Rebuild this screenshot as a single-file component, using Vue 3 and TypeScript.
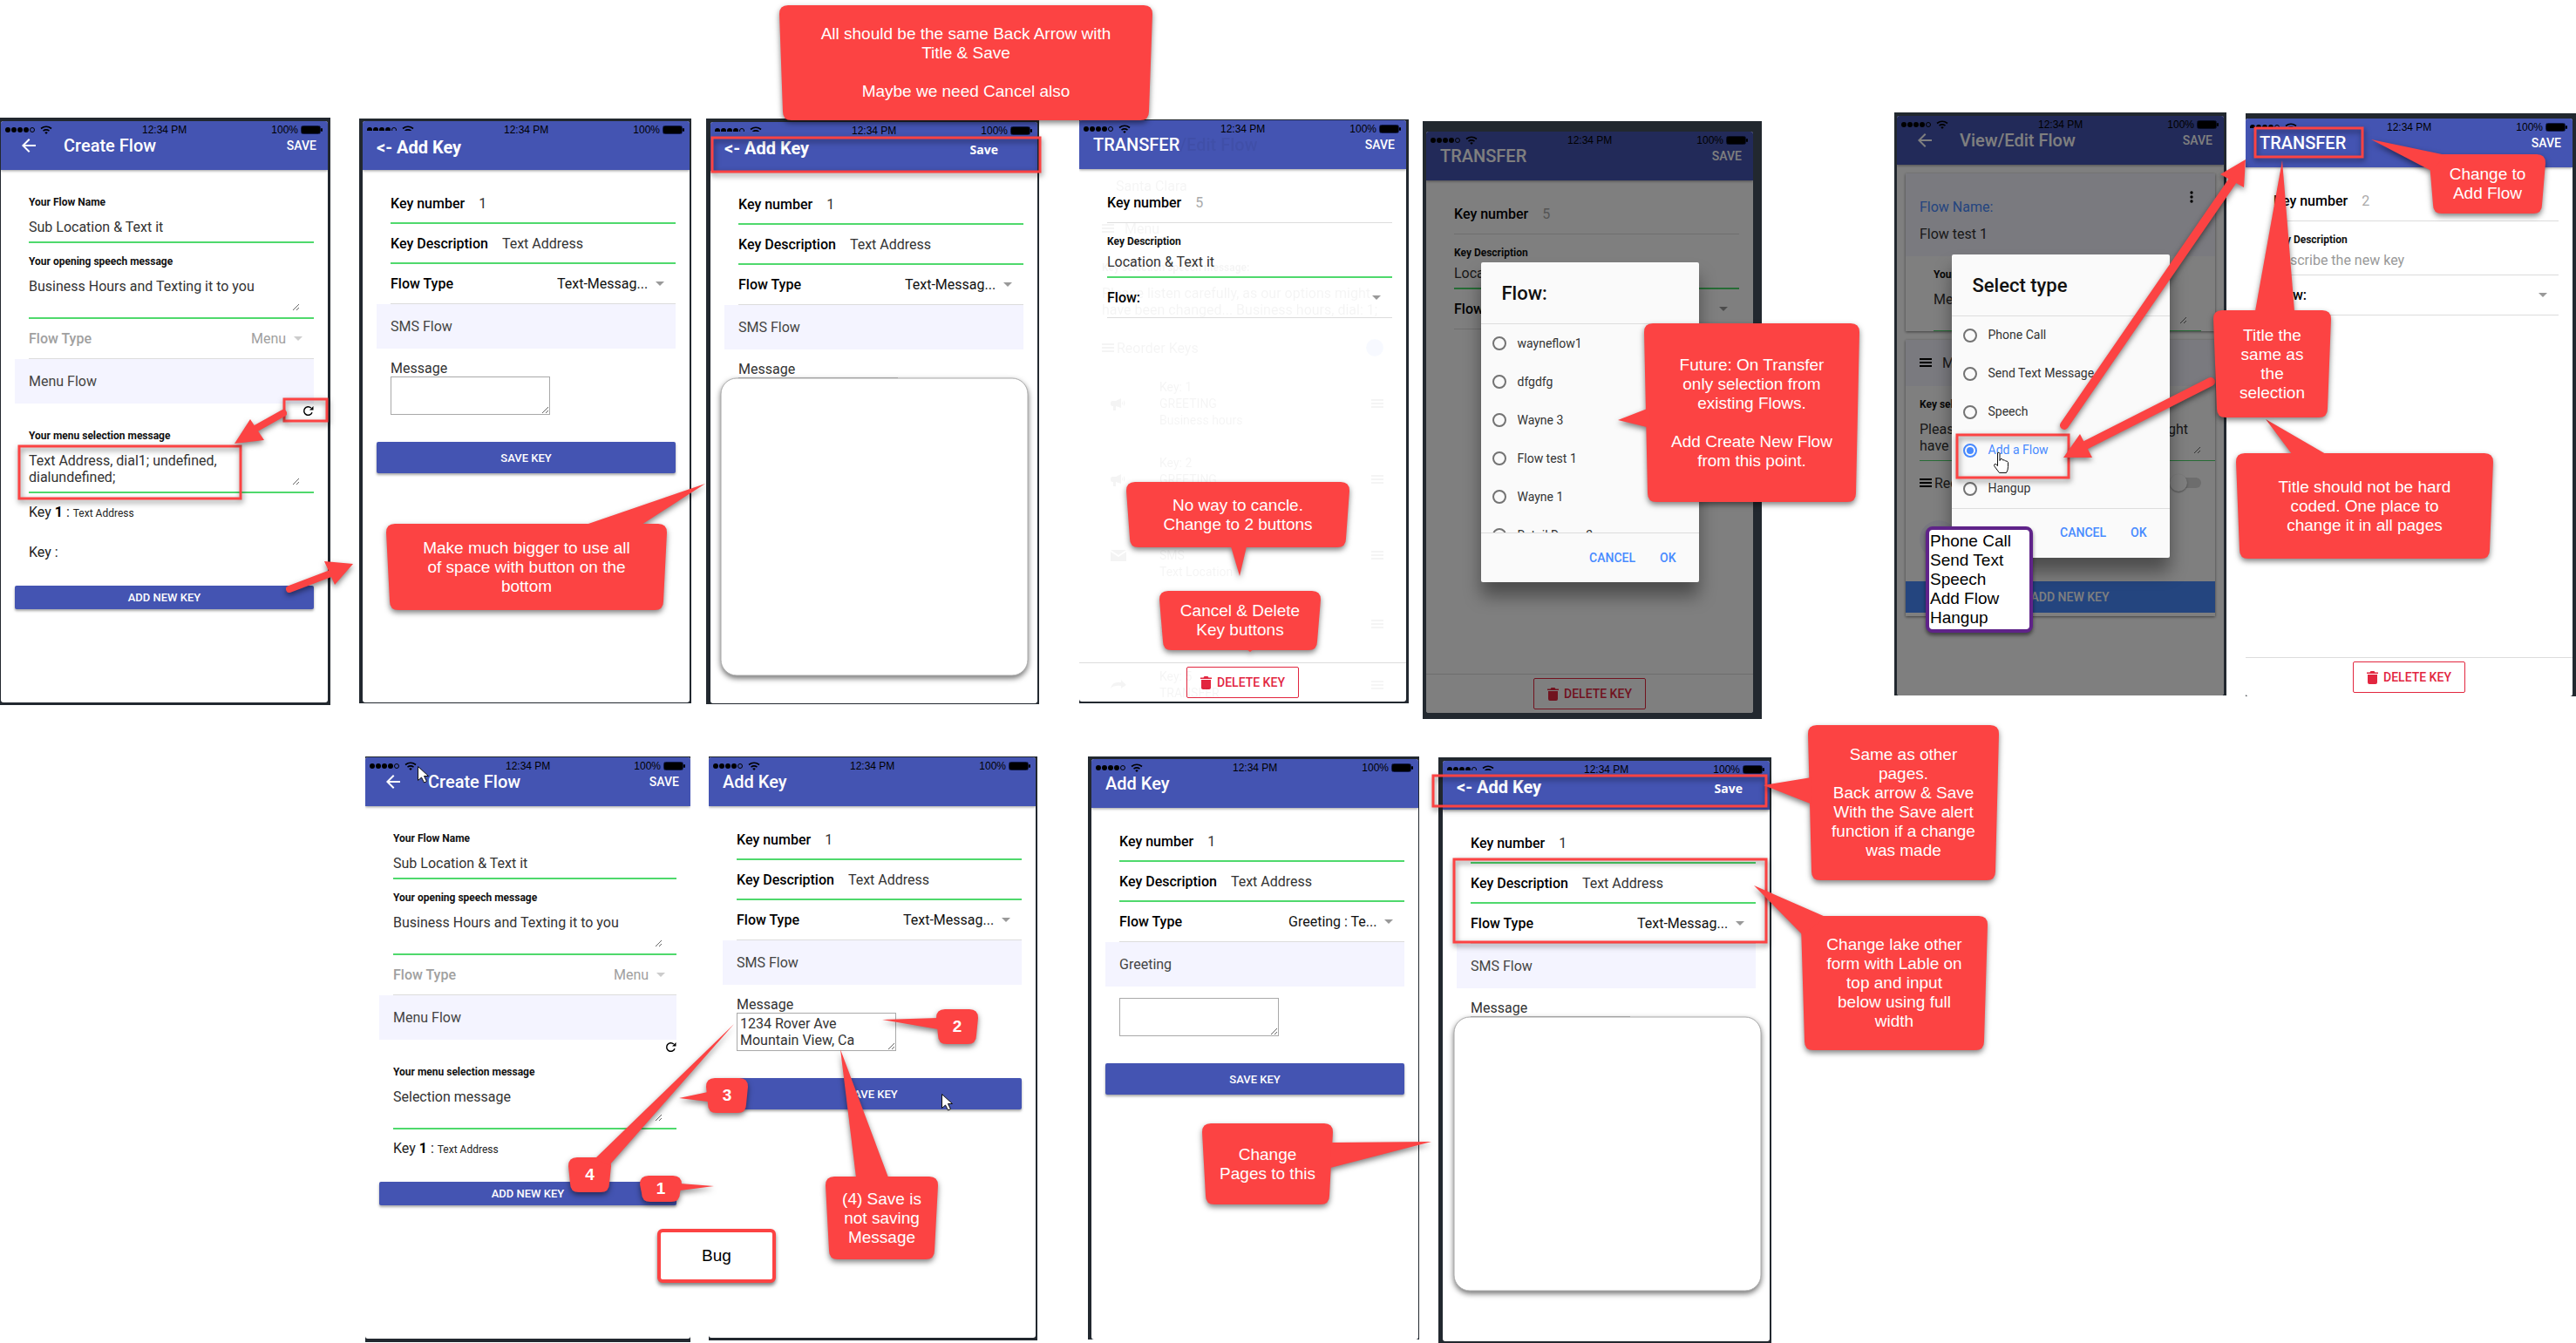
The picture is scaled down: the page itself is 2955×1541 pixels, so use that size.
<script setup lang="ts">
type Point = [number, number]

interface Field {
  kind: 'row' | 'stack' | 'area' | 'select' | 'band' | 'refresh' | 'key' | 'message' | 'button'
  label?: string
  value?: string
  placeholder?: string
  muted?: boolean
  plain?: boolean
  roomy?: boolean
  small?: boolean
}

interface Device {
  id: string
  x: number
  y: number
  w: number
  h: number
  bezel: string
  title: string
  back?: boolean
  bold?: boolean
  edge?: boolean
  action?: string
  patched?: boolean
  fields: Field[]
  remove?: boolean
  ghost?: boolean
  cards?: boolean
  dialog?: { title: string; options: string[]; chosen?: string }
}

interface Callout {
  x: number
  y: number
  w: number
  h: number
  text: string
  strong?: boolean
  tail: Point[]
}

const createFields = (message: string, keys: Field[]): Field[] => [
  { kind: 'stack', label: 'Your Flow Name', value: 'Sub Location & Text it', roomy: true },
  { kind: 'area', label: 'Your opening speech message', value: 'Business Hours and Texting it to you' },
  { kind: 'select', label: 'Flow Type', value: 'Menu', muted: true },
  { kind: 'band', label: 'Menu Flow' },
  { kind: 'refresh' },
  { kind: 'area', label: 'Your menu selection message', value: message },
  ...keys,
  { kind: 'button', label: 'ADD NEW KEY', small: true },
]

const addKeyFields = (flowType: string, band: string, message: Field): Field[] => [
  { kind: 'row', label: 'Key number', value: '1' },
  { kind: 'row', label: 'Key Description', value: 'Text Address' },
  { kind: 'select', label: 'Flow Type', value: flowType },
  { kind: 'band', label: band },
  message,
  { kind: 'button', label: 'SAVE KEY' },
]

const transferFields = (key: string, description: string): Field[] => [
  { kind: 'row', label: 'Key number', value: key, muted: true, plain: true },
  {
    kind: 'stack',
    label: 'Key Description',
    value: description,
    placeholder: 'Describe the new key',
    plain: !description,
  },
  { kind: 'select', label: 'Flow:', value: '' },
]

const firstKey: Field = { kind: 'key', label: '1', value: 'Text Address' }
const sms = (value = ''): Field => ({ kind: 'message', label: 'Message', value })

const devices: Device[] = [
  {
    id: 'create-a', x: 0, y: 135, w: 379, h: 674, bezel: '4px 3px 3px 1px',
    title: 'Create Flow', back: true, action: 'SAVE',
    fields: createFields('Text Address, dial1; undefined,\ndialundefined;', [firstKey, { kind: 'key', label: '' }]),
  },
  {
    id: 'add-a', x: 412, y: 136, w: 381, h: 671, bezel: '3px 2px 1px 4px',
    title: '<- Add Key', bold: true, patched: true,
    fields: addKeyFields('Text-Messag...', 'SMS Flow', sms()),
  },
  {
    id: 'add-b', x: 810, y: 136, w: 382, h: 672, bezel: '4px 2px 1px 5px',
    title: '<- Add Key', bold: true, patched: true, action: 'Save',
    fields: addKeyFields('Text-Messag...', 'SMS Flow', sms()),
  },
  {
    id: 'transfer-a', x: 1238, y: 137, w: 378, h: 670, bezel: '1px 3px 2px 0',
    title: 'TRANSFER', action: 'SAVE', remove: true, ghost: true,
    fields: transferFields('5', 'Location & Text it'),
  },
  {
    id: 'transfer-b', x: 1632, y: 139, w: 389, h: 686, bezel: '12px 10px 7px 4px',
    title: 'TRANSFER', action: 'SAVE', remove: true,
    fields: transferFields('5', 'Location & Text it'),
    dialog: { title: 'Flow:', options: ['wayneflow1', 'dfgdfg', 'Wayne 3', 'Flow test 1', 'Wayne 1', 'Retail Demo 2'] },
  },
  {
    id: 'view', x: 2173, y: 129, w: 381, h: 669, bezel: '4px 3px 0 3px',
    title: 'View/Edit Flow', back: true, action: 'SAVE', cards: true,
    fields: [],
    dialog: {
      title: 'Select type',
      options: ['Phone Call', 'Send Text Message', 'Speech', 'Add a Flow', 'Hangup'],
      chosen: 'Add a Flow',
    },
  },
  {
    id: 'transfer-c', x: 2576, y: 130, w: 379, h: 669, bezel: '6px 4px 0 0',
    title: 'TRANSFER', action: 'SAVE', remove: true, patched: true,
    fields: transferFields('2', ''),
  },
  {
    id: 'create-b', x: 419, y: 868, w: 373, h: 672, bezel: '1px 0 4px 0',
    title: 'Create Flow', back: true, action: 'SAVE',
    fields: createFields('Selection message', [firstKey]),
  },
  {
    id: 'add-c', x: 813, y: 868, w: 377, h: 670, bezel: '1px 2px 3px 0',
    title: 'Add Key',
    fields: addKeyFields('Text-Messag...', 'SMS Flow', sms('1234 Rover Ave\nMountain View, Ca')),
  },
  {
    id: 'add-d', x: 1248, y: 868, w: 380, h: 669, bezel: '3px 1px 0 4px',
    title: 'Add Key',
    fields: addKeyFields('Greeting : Te...', 'Greeting', { kind: 'message', value: '' }),
  },
  {
    id: 'add-e', x: 1650, y: 869, w: 382, h: 672, bezel: '4px 2px 2px 5px',
    title: '<- Add Key', bold: true, edge: true, patched: true, action: 'Save',
    fields: addKeyFields('Text-Messag...', 'SMS Flow', sms()),
  },
]

const callouts: Callout[] = [
  { x: 894, y: 6, w: 428, h: 132, text: 'All should be the same Back Arrow with\nTitle & Save\n\nMaybe we need Cancel also', tail: [] },
  { x: 443, y: 601, w: 322, h: 99, text: 'Make much bigger to use all\nof space with button on the\nbottom', tail: [[672, 602], [809, 555], [736, 602]] },
  { x: 1292, y: 553, w: 256, h: 75, text: 'No way to cancle.\nChange to 2 buttons', tail: [[1412, 627], [1422, 661], [1430, 627]] },
  { x: 1330, y: 678, w: 185, h: 68, text: 'Cancel & Delete\nKey buttons', tail: [[1430, 745], [1434, 748], [1438, 745]] },
  { x: 1886, y: 371, w: 247, h: 205, text: 'Future: On Transfer\nonly selection from\nexisting Flows.\n\nAdd Create New Flow\nfrom this point.', tail: [[1892, 468], [1856, 482], [1893, 491]] },
  { x: 2787, y: 177, w: 133, h: 68, text: 'Change to\nAdd Flow', tail: [[2789, 196], [2720, 160], [2806, 178]] },
  { x: 2565, y: 520, w: 295, h: 121, text: 'Title should not be hard\ncoded. One place to\nchange it in all pages', tail: [[2629, 521], [2599, 481], [2668, 521]] },
  { x: 2539, y: 356, w: 135, h: 123, text: 'Title the\nsame as\nthe\nselection', tail: [[2587, 357], [2618, 184], [2632, 357]] },
  { x: 810, y: 1237, w: 48, h: 40, text: '3', strong: true, tail: [[812, 1253], [779, 1260], [812, 1264]] },
  { x: 1074, y: 1158, w: 48, h: 40, text: '2', strong: true, tail: [[1076, 1168], [1012, 1170], [1076, 1181]] },
  { x: 652, y: 1328, w: 49, h: 40, text: '4', strong: true, tail: [[682, 1330], [842, 1175], [699, 1337]] },
  { x: 734, y: 1349, w: 48, h: 30, text: '1', strong: true, tail: [[780, 1358], [819, 1361], [780, 1366]] },
  { x: 947, y: 1350, w: 129, h: 95, text: '(4) Save is\nnot saving\nMessage', tail: [[982, 1351], [964, 1204], [1019, 1351]] },
  { x: 1379, y: 1289, w: 150, h: 93, text: 'Change\nPages to this', tail: [[1527, 1311], [1642, 1310], [1526, 1340]] },
  { x: 2074, y: 832, w: 219, h: 178, text: 'Same as other\npages.\nBack arrow & Save\nWith the Save alert\nfunction if a change\nwas made', tail: [[2078, 892], [2023, 901], [2079, 923]] },
  { x: 2066, y: 1051, w: 214, h: 154, text: 'Change lake other\nform with Lable on\ntop and input\nbelow using full\nwidth', tail: [[2068, 1073], [2012, 1016], [2094, 1052]] },
]

// Speech bubbles narrow slightly toward their lower edge.
const bubblePath = (c: Callout): string => {
  const r = 10
  const d = c.w > 60 ? 4 : 2
  const [l, t, rt, b] = [c.x, c.y, c.x + c.w, c.y + c.h]
  return [
    `M${l + r} ${t}H${rt - r}Q${rt} ${t} ${rt} ${t + r}`,
    `L${rt - d} ${b - r}Q${rt - d} ${b} ${rt - d - r} ${b}`,
    `H${l + d + r}Q${l + d} ${b} ${l + d} ${b - r}`,
    `L${l} ${t + r}Q${l} ${t} ${l + r} ${t}Z`,
  ].join('')
}

const highlights = [
  { x: 326, y: 458, w: 49, h: 25 },
  { x: 22, y: 512, w: 254, h: 60 },
  { x: 817, y: 158, w: 376, h: 39 },
  { x: 2245, y: 499, w: 128, h: 49 },
  { x: 2587, y: 147, w: 123, h: 33 },
  { x: 1644, y: 890, w: 382, h: 35 },
  { x: 1668, y: 986, w: 358, h: 95 },
]

const arrows = [
  { from: [325, 474], to: [291, 493], head: '269,509 287,481 303,505', weight: 8 },
  { from: [332, 676], to: [382, 657], head: '405,647 372,644 384,671', weight: 8 },
  { from: [2368, 488], to: [2562, 206], head: '2576,183 2547,200 2574,215', weight: 10 },
  { from: [2536, 438], to: [2390, 512], head: '2367,525 2386,498 2400,525', weight: 10 },
]

const panels = [
  { x: 827, y: 434, w: 352, h: 341 },
  { x: 1668, y: 1167, w: 352, h: 314 },
]

const box = (b: { x: number; y: number; w: number; h: number }) => ({
  left: `${b.x}px`,
  top: `${b.y}px`,
  width: `${b.w}px`,
  height: `${b.h}px`,
})

const ghostKeys = [
  { icon: 'horn', lines: ['Key: 1', 'GREETING', 'Business hours'] },
  { icon: 'horn', lines: ['Key: 2', 'GREETING', ''] },
  { icon: 'mail', lines: ['', 'SMS', 'Text Location'] },
  { icon: '', lines: ['Key: 4', 'HANGUP'] },
  { icon: 'turn', lines: ['Key: 5', 'TRANSFER'] },
]
</script>

<template>
  <main class="board">
    <section v-for="d in devices" :key="d.id" class="device" :style="{ ...box(d), padding: d.bezel }">
      <div class="screen">
        <header class="bar">
          <div class="status">
            <svg class="signal" :class="{ patched: d.patched }" width="54" height="12" viewBox="0 0 54 12">
              <circle v-for="n in 4" :key="n" :cx="n * 7 - 4" cy="6" r="3" />
              <circle cx="31" cy="6" r="2.5" fill="none" stroke="#000" />
              <g fill="none" stroke="#000" stroke-width="1.6">
                <path d="M41 4.5q6-4.5 12 0M43.5 7.2q3.500-2.600 7 0" />
              </g>
              <path d="M45.200 9q1.800-1.400 3.600 0L47 11z" />
            </svg>
            <span class="clock">12:34 PM</span>
            <span class="power">100%
              <svg width="25" height="10" viewBox="0 0 25 10">
                <rect x=".5" y=".5" width="22" height="9" rx="2" fill="none" stroke="#111a4a" />
                <rect x="1" y="1" width="21" height="8" rx="1" />
                <rect x="23" y="3" width="2" height="4" rx="1" />
              </svg>
            </span>
          </div>
          <button v-if="d.back" class="back" aria-label="Back">
            <svg width="24" height="24" viewBox="0 0 24 24"><path fill="currentColor" d="M20 11H7.830l5.590-5.590L12 4l-8 8 8 8 1.410-1.410L7.830 13H20z" /></svg>
          </button>
          <h2 class="title" :class="{ bold: d.bold }">{{ d.title }}</h2>
          <span v-if="d.ghost" class="ghost-title" aria-hidden="true">/Edit Flow</span>
          <button v-if="d.action" class="action" :class="{ inset: d.bold, edge: d.edge }">{{ d.action }}</button>
        </header>

        <div v-if="d.ghost" class="ghost" aria-hidden="true">
          <p class="g-top">Santa Clara</p>
          <p class="g-menu"><i class="lines"></i>Menu</p>
          <p class="g-label">Key selection speech message:</p>
          <p class="g-text">Please listen carefully, as our options might<br />have been changed... Business hours, dial: 1;</p>
          <p class="g-order"><i class="lines"></i>Reorder Keys<i class="knob"></i></p>
          <div v-for="(k, i) in ghostKeys" :key="i" class="g-key" :class="{ short: k.lines.length < 3 }">
            <svg width="18" height="16" viewBox="0 0 18 16">
              <path v-if="k.icon === 'horn'" d="M0 6q0-2 2-2h4l6-3v11l-6-2v5H3V10H2q-2 0-2-2zM13 4q2 3 0 5M15 3q3 4 0 7" />
              <path v-else-if="k.icon === 'mail'" d="M0 3l9 6 9-6v11H0zM0 1h18l-9 6z" />
              <path v-else-if="k.icon === 'turn'" d="M0 12Q2 3 12 5V2l6 6-6 4V9Q4 8 0 12z" />
            </svg>
            <div><span v-for="(l, j) in k.lines" :key="j">{{ l }}</span></div>
            <i class="lines"></i>
          </div>
        </div>

        <form v-if="!d.cards" class="form" @submit.prevent>
          <template v-for="(f, i) in d.fields" :key="i">
            <label v-if="f.kind === 'row'" class="field row" :class="{ plain: f.plain, muted: f.muted }">
              <span class="name">{{ f.label }}</span>
              <input type="text" :value="f.value" :disabled="f.muted" />
            </label>
            <label v-else-if="f.kind === 'stack'" class="field stack" :class="{ plain: f.plain, roomy: f.roomy }">
              <span class="caption">{{ f.label }}</span>
              <input type="text" :value="f.value" :placeholder="f.placeholder" />
            </label>
            <label v-else-if="f.kind === 'area'" class="field stack roomy">
              <span class="caption">{{ f.label }}</span>
              <textarea class="free" rows="2" :value="f.value"></textarea>
            </label>
            <label v-else-if="f.kind === 'select'" class="field row choice plain" :class="{ faded: f.muted }">
              <span class="name">{{ f.label }}</span>
              <select :disabled="f.muted"><option>{{ f.value }}</option></select>
              <i class="caret"></i>
            </label>
            <p v-else-if="f.kind === 'band'" class="band">{{ f.label }}</p>
            <div v-else-if="f.kind === 'refresh'" class="refresh">
              <button aria-label="Refresh">
                <svg width="13" height="13" viewBox="0 0 13 13">
                  <path fill="none" stroke="#000" stroke-width="1.500" d="M11 8.200A4.800 4.800 0 1 1 9.800 3" />
                  <path d="M12.500 1v4.500H8z" />
                </svg>
              </button>
            </div>
            <p v-else-if="f.kind === 'key'" class="key">
              Key <template v-if="f.label"><b>{{ f.label }}</b>&nbsp;</template>: <small>{{ f.value }}</small>
            </p>
            <label v-else-if="f.kind === 'message'" class="message">
              <span v-if="f.label">{{ f.label }}</span>
              <textarea rows="2" :value="f.value" :aria-label="f.label || 'Greeting'"></textarea>
            </label>
            <button v-else class="wide" :class="{ small: f.small }">{{ f.label }}</button>
          </template>
        </form>

        <div v-else class="cards">
          <article class="card">
            <div class="card-head tall">
              <div><p class="blue">Flow Name:</p><p>Flow test 1</p></div>
              <svg width="4" height="14" viewBox="0 0 4 14"><circle cx="2" cy="2" r="1.700" /><circle cx="2" cy="7" r="1.700" /><circle cx="2" cy="12" r="1.700" /></svg>
            </div>
            <label class="field stack roomy inset">
              <span class="caption">Your opening speech message</span>
              <textarea class="free" rows="2">Message</textarea>
            </label>
          </article>
          <article class="card">
            <div class="card-head"><i class="lines"></i><span>Menu</span></div>
            <label class="field stack roomy side">
              <span class="caption">Key selection speech message:</span>
              <textarea class="free" rows="2">Please listen carefully, as our options might
have been changed</textarea>
            </label>
            <label class="order"><i class="lines"></i><span>Reorder Keys</span><input type="checkbox" class="switch" /></label>
            <div class="avatar"></div>
            <button class="new-key">ADD NEW KEY</button>
          </article>
        </div>

        <footer v-if="d.remove" class="footer">
          <button class="delete">
            <svg width="13" height="15" viewBox="0 0 13 15"><path fill="currentColor" d="M0 1.500h3.500L4.500 0h4l1 1.500H13V3H0zM1 4h11v9q0 2-2 2H3q-2 0-2-2z" /></svg>
            DELETE KEY
          </button>
        </footer>

        <div v-if="d.dialog" class="scrim">
          <div class="dialog" role="dialog" :aria-label="d.dialog.title">
            <h3>{{ d.dialog.title }}</h3>
            <div class="options">
              <label v-for="o in d.dialog.options" :key="o" :class="{ chosen: o === d.dialog.chosen }">
                <input type="radio" :name="d.id" :checked="o === d.dialog.chosen" />{{ o }}
              </label>
            </div>
            <div class="dialog-foot"><button>CANCEL</button><button>OK</button></div>
          </div>
        </div>
      </div>
    </section>

    <svg class="marks" aria-hidden="true">
      <rect v-for="p in panels" :key="p.y" class="panel" :x="p.x" :y="p.y" :width="p.w" :height="p.h" rx="18" />
      <rect v-for="(h, i) in highlights" :key="'h' + i" class="outline" :x="h.x" :y="h.y" :width="h.w" :height="h.h" />
      <g v-for="(a, i) in arrows" :key="'a' + i" class="red">
        <line :x1="a.from[0]" :y1="a.from[1]" :x2="a.to[0]" :y2="a.to[1]" :stroke-width="a.weight" stroke="#fc4343" stroke-linecap="round" />
        <polygon :points="a.head" />
      </g>
      <g v-for="c in callouts" :key="c.text" class="red">
        <path :d="bubblePath(c)" />
        <polygon v-if="c.tail.length" :points="c.tail.join(' ')" />
      </g>
      <g fill="#fff" stroke="#111" stroke-width="1">
        <path d="M479.500 879.500v16l4-3.500 3 6 3-1.500-3-6h5z" />
        <path d="M1080.500 1255.500v16l4-3.500 3 6 3-1.500-3-6h5z" />
        <path d="M2291.500 519.500q2-1 2.500 1v8l1-2q2-.5 2.500 1.500 2-1 3 1 2-.5 3 1.500v5q0 4-2 7h-8l-6-8q0-2.500 2-2l2 2v-12.500z" />
      </g>
    </svg>

    <p v-for="c in callouts" :key="c.text" class="note" :class="{ strong: c.strong }" :style="box(c)">{{ c.text }}</p>

    <p class="bug">Bug</p>
    <ul class="types">
      <li>Phone Call</li>
      <li>Send Text</li>
      <li>Speech</li>
      <li>Add Flow</li>
      <li>Hangup</li>
    </ul>
  </main>
</template>

<style>
body {
  margin: 0;
  background: #fff;
}
</style>

<style scoped>
* {
  box-sizing: border-box;
}

p,
h2,
h3,
ul {
  margin: 0;
  padding: 0;
}

button,
input,
select,
textarea {
  margin: 0;
  padding: 0;
  border: 0;
  outline: 0;
  background: none;
  color: inherit;
  font: inherit;
}

.board {
  position: relative;
  min-height: 100vh;
  overflow: hidden;
  font: 16px/19px Roboto, "Liberation Sans", sans-serif;
  color: #333;
}

.device {
  position: absolute;
  isolation: isolate;
  background: #22282f;
}

.screen {
  position: relative;
  display: flex;
  flex-direction: column;
  height: 100%;
  overflow: hidden;
  border-radius: 3px;
  background: #fff;
}

.bar {
  position: relative;
  z-index: 1;
  display: flex;
  align-items: center;
  flex: none;
  height: 56px;
  padding: 0 13px 0 16px;
  background: #4454b2;
  color: #fff;
  box-shadow: 0 1px 3px rgba(0, 0, 0, 0.4);
}

.status {
  position: absolute;
  top: 4px;
  left: 5px;
  right: 6px;
  display: flex;
  justify-content: space-between;
  font: 12px/12px "Liberation Sans", Arial, sans-serif;
  color: #000;
}

.signal {
  flex: none;
}

.signal.patched {
  clip-path: inset(0 0 5px 0);
}

.clock {
  padding-left: 6px;
}

.power {
  display: flex;
  align-items: center;
  gap: 3px;
}

.back {
  display: flex;
  width: 56px;
  padding-left: 4px;
}

.title {
  font-size: 20px;
  line-height: 24px;
  font-weight: 500;
}

.title.bold {
  padding-top: 4px;
  font-weight: 700;
}

.action {
  margin-left: auto;
  font-size: 14px;
  line-height: 20px;
  font-weight: 500;
}

.action.inset {
  padding: 8px 32px 0 0;
  font-family: "Open Sans", sans-serif;
  font-weight: 700;
}

.action.edge {
  padding-right: 18px;
}

.ghost-title {
  font-size: 20px;
  font-weight: 500;
  opacity: 0.05;
  color: #000;
}

.form {
  display: flex;
  flex-direction: column;
  flex: 1;
  padding: 16px 16px 0;
}

.field {
  margin-left: 16px;
  border-bottom: 2px solid #4fd96c;
}

.field.plain {
  border-bottom: 1px solid #dcdcdc;
}

.field input {
  min-width: 0;
  width: 100%;
  height: 19px;
}

.row {
  display: flex;
  align-items: center;
  gap: 16px;
  height: 46px;
}

.name {
  flex: none;
  font-weight: 500;
  color: #000;
}

.muted input {
  color: #aaa;
}

.choice {
  gap: 8px;
  padding-right: 13px;
}

.choice select {
  margin-left: auto;
  appearance: none;
  color: #111;
  opacity: 1;
}

.choice.faded .name,
.choice.faded select {
  color: #a0a0a0;
}

.caret {
  border: 5px solid transparent;
  border-top-color: #999;
  border-bottom: 0;
}

.faded .caret {
  border-top-color: #ccc;
}

.stack {
  display: flex;
  flex-direction: column;
  gap: 6px;
  padding: 14px 0 7px;
}

.stack.roomy {
  gap: 11px;
}

.caption {
  font-size: 12px;
  line-height: 15px;
  font-weight: 700;
  color: #111;
}

.stack input::placeholder {
  color: #999;
  opacity: 1;
}

.free {
  margin-right: 16px;
  height: 38px;
  overflow: hidden;
}

.band {
  padding: 16px;
  background: #f4f4ff;
  line-height: 19px;
  color: #444;
}

.refresh {
  display: flex;
  justify-content: flex-end;
  height: 16px;
}

.refresh button {
  display: flex;
  align-items: center;
}

.key {
  padding: 12px 16px 13px;
  color: #222;
}

.key b {
  color: #000;
}

.key small {
  font-size: 12px;
}

.message {
  display: flex;
  flex-direction: column;
  align-items: flex-start;
  padding: 13px 16px 31px;
}

.message textarea {
  width: 183px;
  height: 44px;
  padding: 2px 3px;
  overflow: hidden;
  border: 1px solid #a9a9a9;
}

.wide {
  height: 36px;
  border-radius: 2px;
  background: #4454b2;
  box-shadow: 0 2px 3px rgba(0, 0, 0, 0.35);
  font-size: 13px;
  font-weight: 500;
  color: #fff;
}

.wide.small {
  height: 27px;
  margin-top: 14px;
}

.footer {
  display: flex;
  justify-content: center;
  align-items: center;
  height: 45px;
  border-top: 1px solid #ddd;
}

.delete {
  display: flex;
  justify-content: center;
  align-items: center;
  gap: 6px;
  width: 129px;
  height: 36px;
  border: 1px solid #e2263f;
  border-radius: 2px;
  font-size: 14px;
  font-weight: 500;
  color: #e2263f;
}

.lines {
  flex: none;
  width: 14px;
  height: 11px;
  background: repeating-linear-gradient(#000 0 2px, transparent 2px 4px);
}

.ghost {
  position: absolute;
  inset: 56px 0 0;
  padding: 8px 26px 0;
  overflow: hidden;
  color: #000;
  opacity: 0.04;
}

.ghost p {
  display: flex;
  align-items: center;
}

.ghost .g-top {
  height: 22px;
  padding-left: 16px;
}

.ghost .g-menu {
  height: 76px;
  gap: 12px;
}

.ghost .g-label {
  height: 14px;
  font-size: 12px;
  font-weight: 700;
}

.ghost .g-text {
  height: 64px;
}

.ghost .g-order {
  height: 42px;
  gap: 3px;
}

.knob {
  width: 20px;
  height: 20px;
  margin-left: auto;
  border-radius: 50%;
  background: #488aff;
}

.g-key {
  display: flex;
  align-items: center;
  gap: 38px;
  height: 87px;
  padding: 0 0 0 10px;
  font-size: 14px;
}

.g-key.short {
  height: 70px;
}

.g-key div {
  display: flex;
  flex-direction: column;
}

.g-key span {
  height: 19px;
}

.g-key .lines {
  margin-left: auto;
}

.cards {
  display: flex;
  flex-direction: column;
  gap: 10px;
  padding: 10px;
}

.card {
  box-shadow: 0 1px 3px rgba(0, 0, 0, 0.5);
}

.card-head {
  display: flex;
  align-items: center;
  gap: 12px;
  height: 53px;
  padding: 0 16px;
  background: #f4f4ff;
}

.card-head.tall {
  align-items: flex-start;
  justify-content: space-between;
  height: 95px;
  padding: 20px 25px 0 16px;
}

.tall p {
  padding: 9px 0 3px;
}

.tall .blue {
  color: #488aff;
}

.card .field {
  border-bottom-width: 1px;
}

.card .inset {
  margin: 0 16px 0 32px;
}

.order {
  display: flex;
  align-items: center;
  gap: 3px;
  height: 50px;
  padding: 0 16px;
}

.switch {
  appearance: none;
  position: relative;
  width: 34px;
  height: 12px;
  margin-left: auto;
  border-radius: 6px;
  background: #dadada;
}

.switch::before {
  content: "";
  position: absolute;
  top: -4px;
  left: -2px;
  width: 20px;
  height: 20px;
  border-radius: 50%;
  background: #fff;
  box-shadow: 0 1px 2px rgba(0, 0, 0, 0.4);
}

.avatar {
  width: 44px;
  height: 44px;
  margin: 18px 16px 26px;
  border-radius: 50%;
  background: #f0f0ff;
}

.new-key {
  width: 100%;
  height: 36px;
  margin-bottom: 4px;
  padding-left: 22px;
  background: #488aff;
  font-size: 14px;
  font-weight: 500;
  color: #fff;
}

.scrim {
  position: absolute;
  inset: 0;
  z-index: 2;
  display: flex;
  align-items: center;
  justify-content: center;
  background: rgba(0, 0, 0, 0.5);
}

.dialog {
  width: 250px;
  border-radius: 2px;
  background: #fafafa;
  box-shadow: 0 16px 20px rgba(0, 0, 0, 0.4);
}

.dialog h3 {
  padding: 23px 24px 21px;
  border-bottom: 1px solid #ddd;
  font-size: 22px;
  line-height: 26px;
  font-weight: 500;
  color: #111;
}

.options {
  max-height: 239px;
  overflow: hidden;
}

.options label {
  display: flex;
  align-items: center;
  gap: 13px;
  height: 44px;
  padding-left: 13px;
  font-size: 14px;
}

.options .chosen {
  color: #488aff;
}

.options input {
  appearance: none;
  width: 16px;
  height: 16px;
  border: 2px solid #737373;
  border-radius: 50%;
}

.options input:checked {
  border-color: #488aff;
  background: #488aff;
  background-clip: content-box;
  padding: 2px;
}

.dialog-foot {
  display: flex;
  justify-content: flex-end;
  gap: 28px;
  height: 57px;
  padding-right: 26px;
  border-top: 1px solid #ddd;
  font-size: 14px;
  font-weight: 500;
  color: #488aff;
}

.marks {
  position: absolute;
  inset: 0;
  width: 100%;
  height: 100%;
}

.panel {
  fill: #fff;
  stroke: #aaa;
  filter: drop-shadow(0 3px 3px rgba(0, 0, 0, 0.55));
}

.outline {
  fill: none;
  stroke: #fc4343;
  stroke-width: 3px;
  filter: drop-shadow(1px 3px 3px rgba(0, 0, 0, 0.5));
}

.red {
  fill: #fc4343;
  filter: drop-shadow(0 3px 3px rgba(0, 0, 0, 0.5));
}

.note {
  position: absolute;
  display: flex;
  align-items: center;
  justify-content: center;
  font: 19px/22px "Liberation Sans", Arial, sans-serif;
  text-align: center;
  white-space: pre;
  color: #fff;
}

.note.strong {
  font-weight: 700;
}

.bug,
.types {
  position: absolute;
  background: #fff;
  font: 19px/22px "Liberation Sans", Arial, sans-serif;
  color: #000;
  box-shadow: 0 3px 4px rgba(0, 0, 0, 0.5);
}

.bug {
  left: 754px;
  top: 1410px;
  width: 136px;
  padding: 16px 0;
  border: 4px solid #fc4343;
  border-radius: 6px;
  text-align: center;
}

.types {
  left: 2209px;
  top: 604px;
  width: 123px;
  padding: 2px 1px;
  border: 4px solid #5f2389;
  border-radius: 8px;
  list-style: none;
}
</style>
